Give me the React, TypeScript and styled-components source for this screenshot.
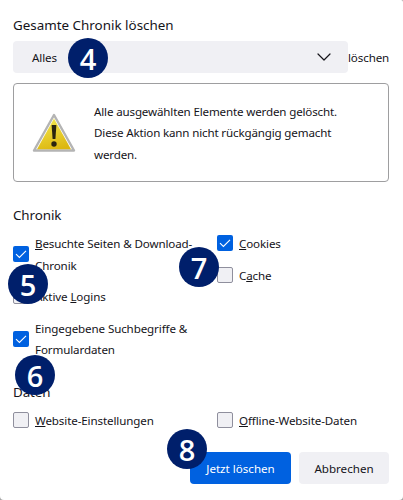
import styled, { createGlobalStyle } from "styled-components";
import { ChevronDown } from "lucide-react";

const Global = createGlobalStyle`
  html, body {
    margin: 0;
    padding: 0;
    background: #a4a4a4;
  }
  * { box-sizing: border-box; }
`;

const Dialog = styled.div`
  position: relative;
  width: 403px;
  height: 500px;
  padding: 15px 14px 16px 13px;
  overflow: hidden;
  border-radius: 0 2px 4px 4px;
  background: #fff;
  color: #15141a;
  font-family: "Noto Sans", "Liberation Sans", sans-serif;
  font-size: 11.6px;
  letter-spacing: -0.12px;
`;

const Title = styled.h1`
  margin: 0;
  font-size: 13.4px;
  font-weight: 400;
  letter-spacing: 0;
  line-height: 20px;
`;

const RangeRow = styled.div`
  display: flex;
  align-items: center;
  margin-top: 6px;
`;

const Select = styled.div`
  display: flex;
  flex: none;
  align-items: center;
  justify-content: space-between;
  width: 335px;
  height: 32px;
  padding: 0 12px 0 19px;
  border-radius: 4px;
  background: #f0f0f4;
`;

const WarningBox = styled.div`
  display: flex;
  align-items: center;
  height: 99px;
  margin-top: 10px;
  padding: 0 20px 0 18px;
  border: 1px solid #9e9ea0;
  border-radius: 4px;
`;

const WarningIcon = styled.svg`
  flex: none;
  width: 44px;
  height: 42px;
  margin-right: 18px;
`;

const WarningText = styled.p`
  margin: 1px 0 0;
  letter-spacing: -0.16px;
  line-height: 21.5px;
`;

const Section = styled.h2<{ $top: number }>`
  margin: ${(p) => p.$top}px 0 0;
  font-size: 13.4px;
  font-weight: 400;
  letter-spacing: -0.1px;
  line-height: 20px;
`;

const Columns = styled.div`
  display: grid;
  grid-template-columns: 204px 1fr;
`;

const Column = styled.div<{ $top?: number }>`
  display: flex;
  flex-direction: column;
  gap: 9px;
  margin-top: ${(p) => p.$top ?? 0}px;
`;

const Option = styled.label`
  display: flex;
  align-items: center;
  gap: 6px;
  line-height: 21.5px;
`;

const Box = styled.span<{ $checked?: boolean }>`
  display: flex;
  flex: none;
  align-items: center;
  justify-content: center;
  width: 16px;
  height: 16px;
  border: ${(p) => (p.$checked ? "none" : "1px solid #8f8f9d")};
  border-radius: 2px;
  background: ${(p) => (p.$checked ? "#0061e0" : "#f0f0f4")};
`;

const Key = styled.span`
  text-decoration: underline;
`;

const LabelText = styled.span`
  width: 170px;
  padding-top: 1px;
`;

const Footer = styled.div`
  display: flex;
  justify-content: flex-end;
  gap: 8px;
  margin-top: 21px;
`;

const Button = styled.button<{ $primary?: boolean }>`
  height: 32px;
  padding: 0;
  width: ${(p) => (p.$primary ? "101px" : "90px")};
  border: none;
  border-radius: 4px;
  background: ${(p) => (p.$primary ? "#0061e0" : "#f0f0f4")};
  color: ${(p) => (p.$primary ? "#fff" : "#15141a")};
  font: inherit;
`;

const Badge = styled.div<{ $x: number; $y: number }>`
  position: absolute;
  left: ${(p) => p.$x - 20}px;
  top: ${(p) => p.$y - 20}px;
  display: flex;
  align-items: center;
  justify-content: center;
  width: 40px;
  height: 40px;
  border-radius: 50%;
  background: #001f6b;
  color: #fff;
  font-family: "Open Sans", "Liberation Sans", sans-serif;
  font-size: 29px;
  font-weight: 600;
  letter-spacing: 0;
`;

function Check() {
  return (
    <svg width="16" height="16" viewBox="0 0 16 16" fill="none">
      <path d="M3 8.2 6.4 11.4 13 4.8" stroke="#fff" strokeWidth="1.1" />
    </svg>
  );
}

function CheckOption({ checked, children }: { checked?: boolean; children: React.ReactNode }) {
  return (
    <Option>
      <Box $checked={checked}>{checked && <Check />}</Box>
      <LabelText>{children}</LabelText>
    </Option>
  );
}

export default function App() {
  return (
    <Dialog>
      <Global />
      <Title>Gesamte Chronik löschen</Title>
      <RangeRow>
        <Select>
          Alles
          <ChevronDown size={24} strokeWidth={1.2} color="#15141a" />
        </Select>
        löschen
      </RangeRow>
      <WarningBox>
        <WarningIcon viewBox="0 0 44 42">
          <defs>
            <linearGradient id="warnFill" x1="0.3" y1="0" x2="0.6" y2="1">
              <stop offset="0" stopColor="#f3e64f" />
              <stop offset="1" stopColor="#dcb70f" />
            </linearGradient>
          </defs>
          <path d="M22 3 42 38.5H2Z" fill="#fff" stroke="#b4b4b4" strokeWidth="2.4" strokeLinejoin="round" />
          <path d="M22 6.5 39 37.2H5Z" fill="url(#warnFill)" />
          <path d="M19.6 13h4.8l-1 14h-2.8Z" fill="#2a2410" />
          <circle cx="22" cy="32" r="2.7" fill="#2a2410" />
        </WarningIcon>
        <WarningText>
          Alle ausgewählten Elemente werden gelöscht.
          <br />
          Diese Aktion kann nicht rückgängig gemacht werden.
        </WarningText>
      </WarningBox>

      <Section $top={23}>Chronik</Section>
      <Columns>
        <Column $top={7}>
          <CheckOption checked>
            <Key>B</Key>esuchte Seiten &amp; Download-Chronik
          </CheckOption>
          <CheckOption>
            Aktive <Key>L</Key>ogins
          </CheckOption>
          <CheckOption checked>
            Eingegebene Suchbegriffe &amp; Formulardaten
          </CheckOption>
        </Column>
        <Column $top={7}>
          <CheckOption checked>
            <Key>C</Key>ookies
          </CheckOption>
          <CheckOption>
            C<Key>a</Key>che
          </CheckOption>
        </Column>
      </Columns>

      <Section $top={21}>Daten</Section>
      <Columns>
        <Column $top={7}>
          <CheckOption>
            <Key>W</Key>ebsite-Einstellungen
          </CheckOption>
        </Column>
        <Column $top={7}>
          <CheckOption>
            <Key>O</Key>ffline-Website-Daten
          </CheckOption>
        </Column>
      </Columns>

      <Footer>
        <Button $primary>Jetzt löschen</Button>
        <Button>Abbrechen</Button>
      </Footer>

      <Badge $x={88} $y={58}>4</Badge>
      <Badge $x={28} $y={284}>5</Badge>
      <Badge $x={35} $y={375}>6</Badge>
      <Badge $x={199} $y={267}>7</Badge>
      <Badge $x={187} $y={449}>8</Badge>
    </Dialog>
  );
}
